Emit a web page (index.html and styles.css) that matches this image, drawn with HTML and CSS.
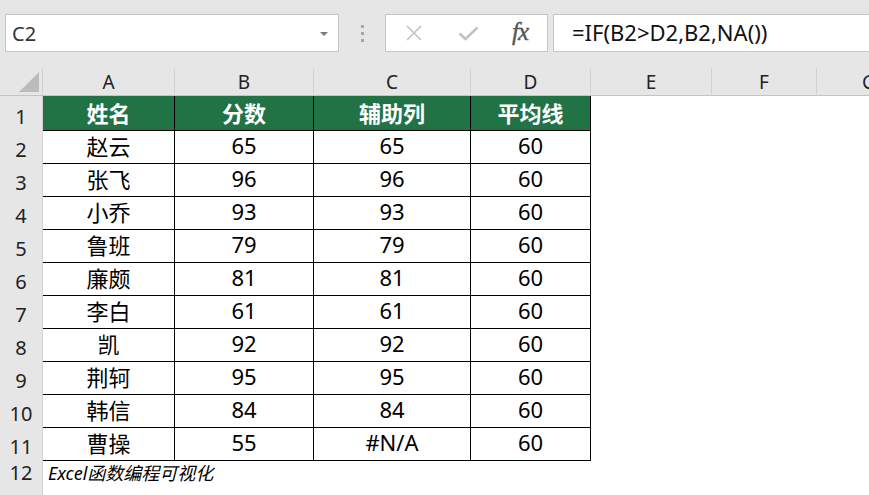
FILE: index.html
```html
<!DOCTYPE html>
<html lang="zh-CN">
<head>
  <meta charset="UTF-8" />
  <title>Excel - 辅助列</title>
  <link rel="stylesheet" href="styles.css">
</head>
<body>

<div class="formula-bar">
  <div class="name-box">
    <span>C2</span>
    <span class="drop"></span>
  </div>
  <div class="grip">
    <i></i><i></i><i></i>
  </div>
  <div class="fx-box">
    <svg class="icon-x" width="18" height="16" viewBox="0 0 18 16">
      <path d="M2 1 L16 15 M16 1 L2 15" stroke="#c3c3c3" stroke-width="1.6" fill="none"/>
    </svg>
    <svg class="icon-ok" width="21" height="15" viewBox="0 0 21 15">
      <path d="M1.5 7.5 L7.5 13 L19.5 1.5" stroke="#c3c3c3" stroke-width="2.6" fill="none"/>
    </svg>
    <span class="fx">fx</span>
  </div>
  <div class="formula">=IF(B2&gt;D2,B2,NA())</div>
</div>

<div class="sheet">
  <div class="row col-head">
    <div class="corner"><span class="tri"></span></div>
    <div>A</div><div>B</div><div>C</div><div>D</div><div>E</div><div>F</div><div>G</div><div></div>
  </div>

  <div class="row">
    <div class="rh">1</div>
    <div class="c h">姓名</div><div class="c h">分数</div><div class="c h">辅助列</div><div class="c h">平均线</div>
    <div></div><div></div><div></div><div></div>
  </div>
  <div class="row">
    <div class="rh">2</div>
    <div class="c">赵云</div><div class="c">65</div><div class="c">65</div><div class="c">60</div>
    <div></div><div></div><div></div><div></div>
  </div>
  <div class="row">
    <div class="rh">3</div>
    <div class="c">张飞</div><div class="c">96</div><div class="c">96</div><div class="c">60</div>
    <div></div><div></div><div></div><div></div>
  </div>
  <div class="row">
    <div class="rh">4</div>
    <div class="c">小乔</div><div class="c">93</div><div class="c">93</div><div class="c">60</div>
    <div></div><div></div><div></div><div></div>
  </div>
  <div class="row">
    <div class="rh">5</div>
    <div class="c">鲁班</div><div class="c">79</div><div class="c">79</div><div class="c">60</div>
    <div></div><div></div><div></div><div></div>
  </div>
  <div class="row">
    <div class="rh">6</div>
    <div class="c">廉颇</div><div class="c">81</div><div class="c">81</div><div class="c">60</div>
    <div></div><div></div><div></div><div></div>
  </div>
  <div class="row">
    <div class="rh">7</div>
    <div class="c">李白</div><div class="c">61</div><div class="c">61</div><div class="c">60</div>
    <div></div><div></div><div></div><div></div>
  </div>
  <div class="row">
    <div class="rh">8</div>
    <div class="c">凯</div><div class="c">92</div><div class="c">92</div><div class="c">60</div>
    <div></div><div></div><div></div><div></div>
  </div>
  <div class="row">
    <div class="rh">9</div>
    <div class="c">荆轲</div><div class="c">95</div><div class="c">95</div><div class="c">60</div>
    <div></div><div></div><div></div><div></div>
  </div>
  <div class="row">
    <div class="rh">10</div>
    <div class="c">韩信</div><div class="c">84</div><div class="c">84</div><div class="c">60</div>
    <div></div><div></div><div></div><div></div>
  </div>
  <div class="row">
    <div class="rh">11</div>
    <div class="c">曹操</div><div class="c">55</div><div class="c">#N/A</div><div class="c">60</div>
    <div></div><div></div><div></div><div></div>
  </div>
  <div class="row note-row">
    <div class="rh">12</div>
    <div class="note">Excel函数编程可视化</div>
  </div>
  <div class="row last-row">
    <div class="rh"></div>
    <div class="wide"></div>
  </div>
</div>

</body>
</html>
```

FILE: styles.css
```css
body {
  margin: 0;
  background: #fff;
  font-family: "Noto Sans", "Noto Sans CJK SC", sans-serif;
  color: #000;
  overflow: hidden;
}

/* formula bar */
.formula-bar {
  display: flex;
  align-items: stretch;
  background: #e6e6e6;
  padding: 14px 0 16px 5px;
  height: 38px;
}

.name-box,
.fx-box,
.formula {
  box-sizing: border-box;
  height: 38px;
  background: #fff;
  border: 1px solid #c6c6c6;
}

.name-box {
  width: 334px;
  display: flex;
  align-items: center;
  justify-content: space-between;
  padding: 0 10px 0 6px;
  font-size: 20px;
  color: #333;
}

.drop {
  width: 0;
  height: 0;
  border-left: 4px solid transparent;
  border-right: 4px solid transparent;
  border-top: 4px solid #7a7a7a;
  margin-top: 2px;
}

.grip {
  width: 46px;
  display: flex;
  flex-direction: column;
  align-items: center;
  justify-content: center;
  gap: 4px;
}

.grip i {
  display: block;
  width: 3px;
  height: 3px;
  background: #a6a6a6;
}

.fx-box {
  width: 163px;
  display: flex;
  align-items: center;
  padding-left: 19px;
}

.icon-ok {
  margin-left: 35px;
}

.fx {
  margin-left: 33px;
  font-family: "Liberation Serif", serif;
  font-style: italic;
  font-size: 25px;
  color: #555;
  margin-top: -3px;
  letter-spacing: -1px;
  -webkit-text-stroke: 0.4px #555;
}

.formula {
  flex: 1;
  margin-left: 5px;
  border-right: none;
  padding-left: 18px;
  font-size: 22px;
  line-height: 34px;
  color: #111;
}

/* sheet */
.row {
  display: grid;
  grid-template-columns: 43px 132px 139px 157px 120px 121px 105px 105px 1fr;
  height: 33px;
}

.row > div {
  box-sizing: border-box;
  display: flex;
  align-items: center;
  justify-content: center;
  font-size: 22px;
  padding-bottom: 2px;
}

.col-head {
  height: 28px;
  background: #e6e6e6;
}

.col-head > div {
  font-size: 19px;
  color: #222;
  border-right: 1px solid #d2d2d2;
  border-bottom: 1px solid #c4c4c4;
  padding-bottom: 0;
}

.corner {
  position: relative;
}

.tri {
  position: absolute;
  right: 3px;
  bottom: 3px;
  width: 0;
  height: 0;
  border-left: 20px solid transparent;
  border-bottom: 20px solid #bcbcbc;
}

.row > .rh {
  background: #e6e6e6;
  border-right: 1px solid #d2d2d2;
  border-bottom: 1px solid #d2d2d2;
  font-size: 20px;
  color: #222;
  align-items: flex-end;
  padding-bottom: 0;
}

.row > .c {
  border-right: 1px solid #000;
  border-bottom: 1px solid #000;
}

.row > .h {
  background: #217346;
  color: #fff;
  font-weight: bold;
}

.note-row {
  height: 27px;
}

.row > .note {
  grid-column: 2 / -1;
  justify-content: flex-start;
  padding-left: 5px;
  font-size: 18px;
  font-style: italic;
  white-space: nowrap;
}

.wide {
  grid-column: 2 / -1;
}
```
